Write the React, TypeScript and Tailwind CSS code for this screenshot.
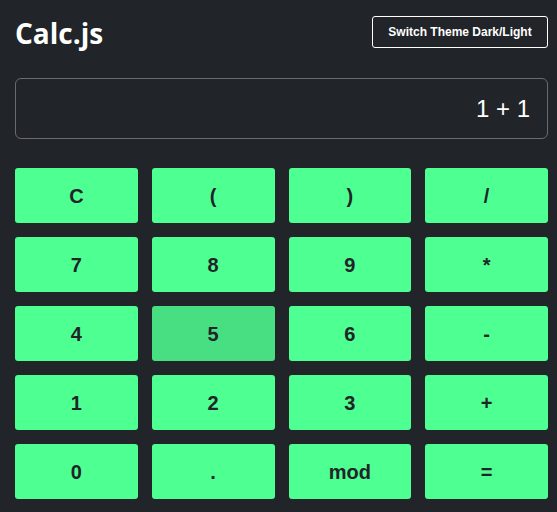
import React from "react";

const keys = ["C", "(", ")", "/", "7", "8", "9", "*", "4", "5", "6", "-", "1", "2", "3", "+", "0", ".", "mod", "="];

export default function App() {
  return (
    <div className="w-[557px] h-[512px] bg-[#212429] overflow-hidden" style={{ fontFamily: "'Liberation Sans', Arial, sans-serif" }}>
      <div className="flex items-center justify-between pl-[15px] pr-[9px] pt-[16px]">
        <h1 className="text-[28px] font-bold text-white leading-none mt-[1px]" style={{ fontFamily: "'Open Sans', sans-serif" }}>Calc.js</h1>
        <button className="w-[176px] h-[32px] border border-white rounded-[3px] text-white text-[12px] font-bold">Switch Theme Dark/Light</button>
      </div>
      <div className="ml-[15px] mr-[9px] mt-[30px] h-[61px] border border-[#6b6b6b] rounded-[6px] flex items-center justify-end pr-[17px]">
        <span className="text-white text-[24px]">1 + 1</span>
      </div>
      <div className="ml-[15px] mr-[9px] mt-[29px] grid grid-cols-4 gap-x-[14px] gap-y-[14px]">
        {keys.map((k) => (
          <button
            key={k}
            className={`h-[55px] rounded-[3px] text-[20px] font-bold text-[#212429] ${k === "5" ? "bg-[#47df82]" : "bg-[#4eff91]"}`}
          >
            {k}
          </button>
        ))}
      </div>
    </div>
  );
}
